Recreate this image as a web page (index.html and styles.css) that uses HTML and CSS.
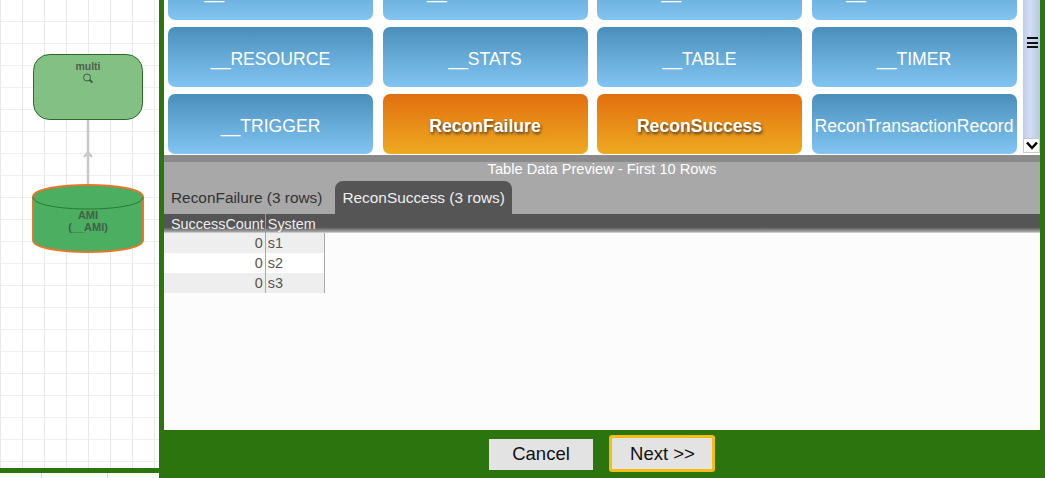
FILE: index.html
```html
<!DOCTYPE html>
<html lang="en">
<head>
<meta charset="utf-8">
<title>Table Data Preview</title>
<link rel="stylesheet" href="styles.css">
</head>
<body>
<div class="page">
  <aside class="side">
    <div class="canvas">
      <svg class="diagram" width="159" height="468" viewBox="0 0 159 468">
        <line class="edge" x1="88" y1="120" x2="88" y2="186"/>
        <path class="arrow" d="M84 157 L88 152.5 L92 157"/>
        <rect class="node" x="33.5" y="54.5" width="109" height="65" rx="16"/>
        <text class="node-title" x="88" y="70">multi</text>
        <circle class="lens" cx="87" cy="77.5" r="3.5"/>
        <line class="lens-handle" x1="89.5" y1="80" x2="92.5" y2="82.5"/>
        <path class="cyl" d="M33 197 C33 181 143 181 143 197 V240 C143 256 33 256 33 240 Z"/>
        <path class="cyl-rim" d="M33 197 C33 213 143 213 143 197"/>
        <text class="cyl-title" x="88" y="219">AMI</text>
        <text class="cyl-title" x="88" y="231">(__AMI)</text>
      </svg>
    </div>
    <div class="side-gap"></div>
    <div class="minimap"></div>
  </aside>
  <main class="main">
    <section class="picker">
      <div class="picker-view">
        <div class="grid">
          <button class="tile">__PROCEDURE</button>
          <button class="tile">__PROPERTY</button>
          <button class="tile">__RELAY</button>
          <button class="tile">__REPLICATION</button>
          <button class="tile">__RESOURCE</button>
          <button class="tile">__STATS</button>
          <button class="tile">__TABLE</button>
          <button class="tile">__TIMER</button>
          <button class="tile">__TRIGGER</button>
          <button class="tile tile-on">ReconFailure</button>
          <button class="tile tile-on">ReconSuccess</button>
          <button class="tile">ReconTransactionRecord</button>
        </div>
      </div>
      <div class="scrollbar">
        <div class="thumb"><span class="grip"></span></div>
        <div class="scroll-down">
          <svg width="14" height="11" viewBox="0 0 14 11"><path d="M2 2.5 L7 8 L12 2.5" class="chev"/></svg>
        </div>
      </div>
    </section>
    <section class="preview">
      <div class="preview-title">Table Data Preview - First 10 Rows</div>
      <div class="tabs">
        <div class="tab">ReconFailure (3 rows)</div>
        <div class="tab tab-on">ReconSuccess (3 rows)</div>
      </div>
      <div class="table-wrap">
        <table class="data">
          <thead>
            <tr><th>SuccessCount</th><th class="col-sys">System</th></tr>
          </thead>
          <tbody>
            <tr><td class="num">0</td><td>s1</td></tr>
            <tr><td class="num">0</td><td>s2</td></tr>
            <tr><td class="num">0</td><td>s3</td></tr>
          </tbody>
        </table>
        <div class="head-fill"></div>
      </div>
    </section>
    <footer class="actions">
      <button class="btn btn-cancel">Cancel</button>
      <button class="btn btn-next">Next &gt;&gt;</button>
    </footer>
  </main>
</div>
</body>
</html>
```
FILE: styles.css
```css
* { box-sizing: border-box; }
html, body { margin: 0; height: 100%; overflow: hidden; }
body { font-family: "Liberation Sans", Arial, sans-serif; background: #2c750e; }
.page { display: flex; width: 1045px; height: 478px; }

.side { width: 159px; display: flex; flex-direction: column; flex: none; }
.canvas {
  height: 468px;
  background-color: #fff;
  background-image:
    linear-gradient(to right, #e7e7ec 1px, transparent 1px),
    linear-gradient(to bottom, #efeff2 1px, transparent 1px);
  background-size: 22px 22px;
  background-position: 22px 21px;
}
.diagram { display: block; }
.edge { stroke: #c8c8c8; stroke-width: 2.5; }
.arrow { fill: none; stroke: #c8c8c8; stroke-width: 2.5; }
.node { fill: #83c083; stroke: #2a6a25; stroke-width: 1; }
.node-title { font: bold 10.5px "Liberation Sans", sans-serif; fill: #4f5f4f; text-anchor: middle; }
.lens { fill: none; stroke: #3f5f45; stroke-width: 1; }
.lens-handle { stroke: #3f5f45; stroke-width: 2; }
.cyl { fill: #4cae60; stroke: #e2782a; stroke-width: 2; }
.cyl-rim { fill: none; stroke: #2a7a30; stroke-width: 1; }
.cyl-title { font: bold 11px "Liberation Sans", sans-serif; fill: #43604a; text-anchor: middle; }
.side-gap { height: 5px; background: #2c750e; }
.minimap {
  height: 5px;
  background-color: #fbfff8;
  background-image: linear-gradient(to right, #c5e0b5 1px, transparent 1px);
  background-size: 66px 100%;
  background-position: 41px 0;
}

.main {
  width: 886px; margin-left: 5px;
  display: flex; flex-direction: column; height: 478px;
  border-right: 5px solid #2c750e;
}
.picker { height: 155px; display: flex; background: #fff; flex: none; }
.picker-view { width: 859px; overflow: hidden; }
.grid {
  margin-top: -40px; padding-left: 4px;
  display: grid; grid-template-columns: repeat(4, 205px); column-gap: 9.5px; row-gap: 7px;
}
.tile {
  height: 60px; border: 0; border-radius: 7px; padding: 4px 0 0;
  font: 17.6px "Liberation Sans", Arial, sans-serif; color: #fff;
  background: linear-gradient(to bottom, #4a8fbb, #82c5f3);
}
.tile-on {
  font-weight: bold;
  background: linear-gradient(to bottom, #e26f10, #eeaa20);
  text-shadow: 1px 2px 3px #4a3a20;
}
.scrollbar { width: 17px; display: flex; flex-direction: column; margin-bottom: 2px; }
.thumb {
  flex: 1; display: flex; align-items: flex-start; justify-content: center; padding: 37px 0 0 1px;
  background: linear-gradient(to right, #bfcce8, #d3ddf2 40%, #b9c7e6);
}
.grip { display: block; width: 11px; height: 11px; border-top: 2px solid #111; border-bottom: 2px solid #111; position: relative; }
.grip::after { content: ""; position: absolute; left: 0; right: 0; top: 2.5px; height: 2px; background: #111; }
.scroll-down { height: 15px; background: #fff; border: 1px solid #c8c8c8; display: flex; align-items: center; justify-content: center; }
.chev { fill: none; stroke: #000; stroke-width: 2.5; }

.preview { flex: 1; display: flex; flex-direction: column; background: #a8a8a8; border-top: 7px solid #8a8a8a; }
.preview-title { height: 19px; text-align: center; font-size: 14.67px; line-height: 14px; color: #fff; }
.tabs { height: 33px; display: flex; align-items: flex-end; flex: none; }
.tab { height: 33px; padding: 0 7px; margin-right: 6px; font-size: 15.4px; line-height: 34px; color: #333; }
.tab-on { background: #555; color: #eee; border-radius: 8px 8px 0 0; }
.table-wrap { flex: 1; position: relative; background: #fcfcfc; }
.head-fill {
  position: absolute; left: 160px; right: 0; top: 0; height: 19px;
  background: linear-gradient(to bottom, #555 70%, #aaa 95%, #eee);
}
.data { border-collapse: collapse; font-size: 14.4px; color: #555; }
.data th {
  height: 19px; padding: 0 1px 0 7px; font-weight: normal; color: #eee; text-align: left; line-height: 16px;
  background: linear-gradient(to bottom, #555 70%, #aaa 95%, #eee);
  border-right: 1px solid #999;
}
.data th.col-sys { padding: 0 8px 0 2px; }
.data td { height: 20px; padding: 0 2px; background: #fff; border-right: 1px solid #aaa; line-height: 18px; }
.data tbody tr:nth-child(odd) td { background: #eee; }
.num { text-align: right; }

.actions { height: 48px; flex: none; background: #2c750e; display: flex; align-items: center; justify-content: center; gap: 16px; padding-bottom: 1px; }
.btn {
  width: 104px; height: 31px; border: 0; background: #e3e3e3; color: #111;
  font: 18.5px "Liberation Sans", Arial, sans-serif; padding: 0;
}
.btn-cancel { margin-top: 1px; }
.btn-next { height: 37px; width: 106px; padding-left: 1px; border: 3px solid #f3bd16; border-radius: 3px; }
```
